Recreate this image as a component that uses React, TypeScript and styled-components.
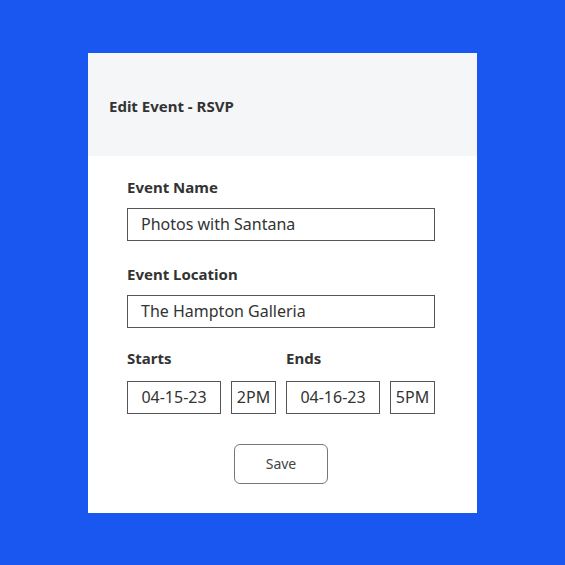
import styled, { createGlobalStyle } from "styled-components";

const GlobalStyle = createGlobalStyle`
  html, body {
    margin: 0;
    padding: 0;
  }
  body {
    font-family: "Noto Sans", "DejaVu Sans", sans-serif;
    color: #333;
  }
`;

const Page = styled.div`
  width: 565px;
  height: 565px;
  background-color: #1a56f0;
  display: flex;
  align-items: center;
  justify-content: center;
`;

const Card = styled.div`
  width: 389px;
  height: 460px;
  background-color: #fff;
  display: flex;
  flex-direction: column;
`;

const Header = styled.div`
  height: 103px;
  background-color: #f5f6f8;
  display: flex;
  align-items: center;
  padding: 3px 0 0 21px;
  box-sizing: border-box;
`;

const Title = styled.h1`
  margin: 0;
  font-size: 15px;
  font-weight: 700;
  color: #333;
`;

const Body = styled.div`
  padding: 21px 42px 0 39px;
  display: flex;
  flex-direction: column;
`;

const Field = styled.div<{ $gap?: number }>`
  display: flex;
  flex-direction: column;
  margin-bottom: ${(p) => p.$gap ?? 23}px;
`;

const Label = styled.label<{ $space?: number }>`
  font-size: 15px;
  font-weight: 700;
  line-height: 20px;
  margin-bottom: ${(p) => p.$space ?? 11}px;
  color: #333;
`;

const Box = styled.div<{ $w?: number; $center?: boolean }>`
  box-sizing: border-box;
  width: ${(p) => (p.$w ? `${p.$w}px` : "100%")};
  height: 33px;
  border: 1px solid #555;
  display: flex;
  align-items: center;
  justify-content: ${(p) => (p.$center ? "center" : "flex-start")};
  padding: ${(p) => (p.$center ? "0" : "0 13px")};
  font-size: 16px;
  color: #333;
`;

const TimeRow = styled.div`
  display: flex;
  gap: 10px;
`;

const TimeGroup = styled.div`
  display: flex;
  flex-direction: column;
`;

const Pair = styled.div`
  display: flex;
  gap: 10px;
`;

const Actions = styled.div`
  display: flex;
  justify-content: center;
`;

const SaveButton = styled.button`
  width: 94px;
  height: 40px;
  border: 1px solid #777;
  border-radius: 6px;
  background: #fff;
  font-family: inherit;
  font-size: 14px;
  color: #444;
  cursor: pointer;
`;

export default function App() {
  return (
    <>
      <GlobalStyle />
      <Page>
        <Card>
          <Header>
            <Title>Edit Event - RSVP</Title>
          </Header>
          <Body>
            <Field>
              <Label>Event Name</Label>
              <Box>Photos with Santana</Box>
            </Field>
            <Field $gap={20}>
              <Label>Event Location</Label>
              <Box>The Hampton Galleria</Box>
            </Field>
            <Field $gap={30}>
              <TimeRow>
                <TimeGroup>
                  <Label $space={13}>Starts</Label>
                  <Pair>
                    <Box $w={94} $center>04-15-23</Box>
                    <Box $w={45} $center>2PM</Box>
                  </Pair>
                </TimeGroup>
                <TimeGroup>
                  <Label $space={13}>Ends</Label>
                  <Pair>
                    <Box $w={94} $center>04-16-23</Box>
                    <Box $w={45} $center>5PM</Box>
                  </Pair>
                </TimeGroup>
              </TimeRow>
            </Field>
            <Actions>
              <SaveButton>Save</SaveButton>
            </Actions>
          </Body>
        </Card>
      </Page>
    </>
  );
}
